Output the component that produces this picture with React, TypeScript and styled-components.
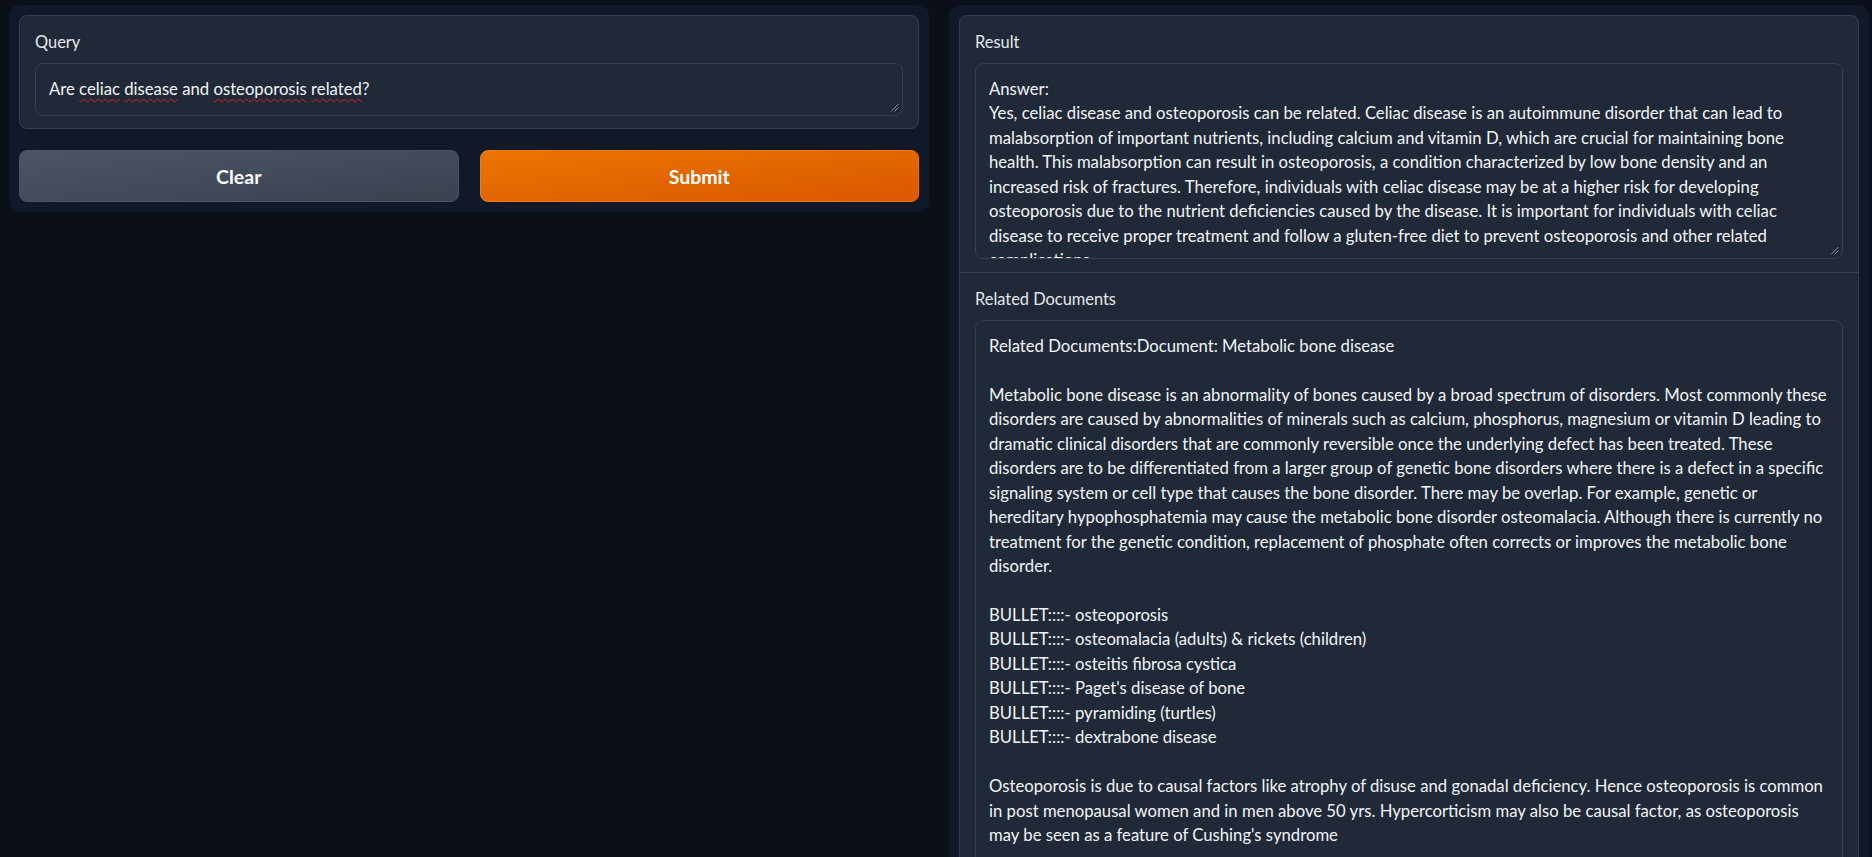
import React from "react";
import styled, { createGlobalStyle } from "styled-components";

const GlobalStyle = createGlobalStyle`
  html, body {
    margin: 0;
    padding: 0;
    background: #0b0f19;
  }
  body {
    font-family: Lato, "Liberation Sans", sans-serif;
    color: #f3f4f6;
  }
  * { box-sizing: border-box; }
`;

const Page = styled.div`
  display: grid;
  grid-template-columns: 920px 920px;
  column-gap: 20px;
  align-items: start;
  padding: 5px 3px 0 9px;
  min-height: 857px;
`;

const Panel = styled.div`
  background: #111827;
  border-radius: 10px;
  padding: 10px;
  display: flex;
  flex-direction: column;
  gap: 21px;
`;

const Block = styled.div`
  background: #1f2937;
  border: 1px solid #374151;
  border-radius: 8px;
  overflow: hidden;
`;

const Field = styled.div<{ $divider?: boolean; $bottom?: number }>`
  display: flex;
  flex-direction: column;
  gap: 10px;
  padding: 15px 15px ${(p) => p.$bottom ?? 12}px 15px;
  border-top: ${(p) => (p.$divider ? "1px solid #374151" : "none")};
`;

const Label = styled.span`
  font-size: 16.4px;
  line-height: 22px;
  color: #e5e7eb;
`;

const TextBox = styled.div<{ $height?: number }>`
  position: relative;
  border: 1px solid #374151;
  border-radius: 8px;
  background: #1f2937;
  padding: 13px 13px;
  font-size: 16.7px;
  line-height: 24.45px;
  color: #f3f4f6;
  white-space: pre;
  overflow: hidden;
  height: ${(p) => (p.$height ? `${p.$height}px` : "auto")};
`;

const Misspelled = styled.span`
  text-decoration: underline wavy #e11d1d;
  text-decoration-thickness: 1px;
  text-underline-offset: 3px;
  text-decoration-skip-ink: none;
`;

const GripBox = styled.svg`
  position: absolute;
  right: 3px;
  bottom: 3px;
  width: 9px;
  height: 9px;
`;

const ButtonRow = styled.div`
  display: grid;
  grid-template-columns: 1fr 1fr;
  column-gap: 21px;
`;

const Button = styled.button<{ $primary?: boolean }>`
  height: 52px;
  border-radius: 8px;
  border: 1px solid ${(p) => (p.$primary ? "#ee7a10" : "#4b5563")};
  background: ${(p) =>
    p.$primary
      ? "linear-gradient(to bottom right, #ec7500, #da5700)"
      : "linear-gradient(to bottom right, #4b5563, #3a4250)"};
  color: #ffffff;
  font-family: Lato, "Liberation Sans", sans-serif;
  font-weight: 700;
  font-size: 19.5px;
  cursor: pointer;
`;

const Grip = () => (
  <GripBox viewBox="0 0 9 9">
    <line x1="1" y1="8.5" x2="8.5" y2="1" stroke="#111827" strokeWidth="2.2" />
    <line x1="4.5" y1="8.5" x2="8.5" y2="4.5" stroke="#111827" strokeWidth="2.2" />
    <line x1="1" y1="8.5" x2="8.5" y2="1" stroke="#a3a8b1" strokeWidth="1" />
    <line x1="4.5" y1="8.5" x2="8.5" y2="4.5" stroke="#a3a8b1" strokeWidth="1" />
  </GripBox>
);

const answerLines = [
  "Answer:",
  "Yes, celiac disease and osteoporosis can be related. Celiac disease is an autoimmune disorder that can lead to",
  "malabsorption of important nutrients, including calcium and vitamin D, which are crucial for maintaining bone",
  "health. This malabsorption can result in osteoporosis, a condition characterized by low bone density and an",
  "increased risk of fractures. Therefore, individuals with celiac disease may be at a higher risk for developing",
  "osteoporosis due to the nutrient deficiencies caused by the disease. It is important for individuals with celiac",
  "disease to receive proper treatment and follow a gluten-free diet to prevent osteoporosis and other related",
  "complications.",
];

const docLines = [
  "Related Documents:Document: Metabolic bone disease",
  "",
  "Metabolic bone disease is an abnormality of bones caused by a broad spectrum of disorders. Most commonly these",
  "disorders are caused by abnormalities of minerals such as calcium, phosphorus, magnesium or vitamin D leading to",
  "dramatic clinical disorders that are commonly reversible once the underlying defect has been treated. These",
  "disorders are to be differentiated from a larger group of genetic bone disorders where there is a defect in a specific",
  "signaling system or cell type that causes the bone disorder. There may be overlap. For example, genetic or",
  "hereditary hypophosphatemia may cause the metabolic bone disorder osteomalacia. Although there is currently no",
  "treatment for the genetic condition, replacement of phosphate often corrects or improves the metabolic bone",
  "disorder.",
  "",
  "BULLET::::- osteoporosis",
  "BULLET::::- osteomalacia (adults) & rickets (children)",
  "BULLET::::- osteitis fibrosa cystica",
  "BULLET::::- Paget's disease of bone",
  "BULLET::::- pyramiding (turtles)",
  "BULLET::::- dextrabone disease",
  "",
  "Osteoporosis is due to causal factors like atrophy of disuse and gonadal deficiency. Hence osteoporosis is common",
  "in post menopausal women and in men above 50 yrs. Hypercorticism may also be causal factor, as osteoporosis",
  "may be seen as a feature of Cushing's syndrome",
  "",
  "Osteomalacia is a softening of the bones caused by impaired bone metabolism.",
];

export default function App() {
  return (
    <>
      <GlobalStyle />
      <Page>
        <Panel>
          <Block>
            <Field>
              <Label>Query</Label>
              <TextBox $height={53}>
                Are <Misspelled>celiac</Misspelled> <Misspelled>disease</Misspelled> and{" "}
                <Misspelled>osteoporosis</Misspelled> <Misspelled>related</Misspelled>?
                <Grip />
              </TextBox>
            </Field>
          </Block>
          <ButtonRow>
            <Button type="button">Clear</Button>
            <Button type="button" $primary>
              Submit
            </Button>
          </ButtonRow>
        </Panel>
        <Panel>
          <Block>
            <Field $bottom={13}>
              <Label>Result</Label>
              <TextBox $height={196}>
                {answerLines.join("\n")}
                <Grip />
              </TextBox>
            </Field>
            <Field $divider $bottom={20}>
              <Label>Related Documents</Label>
              <TextBox>{docLines.join("\n")}</TextBox>
            </Field>
          </Block>
        </Panel>
      </Page>
    </>
  );
}
